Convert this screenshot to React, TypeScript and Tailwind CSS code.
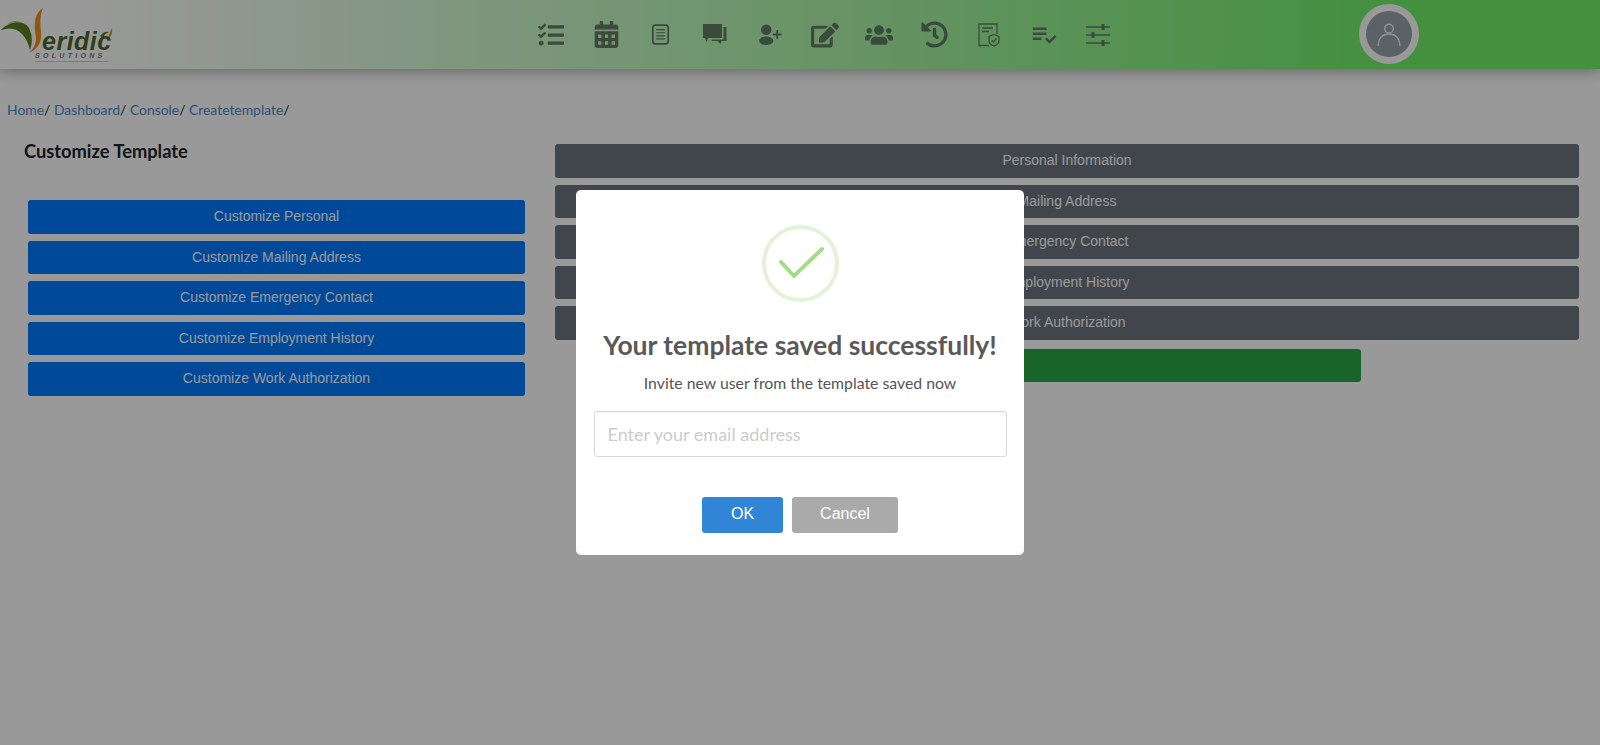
import { FaCalendarAlt, FaEdit, FaHistory, FaTasks, FaUsers } from 'react-icons/fa'
import { MdPlaylistAddCheck } from 'react-icons/md'

const customizeItems = ['Customize Personal', 'Customize Mailing Address', 'Customize Emergency Contact', 'Customize Employment History', 'Customize Work Authorization']
const sectionItems = ['Personal Information', 'Mailing Address', 'Emergency Contact', 'Employment History', 'Work Authorization']

const Logo = () => (
  <div className="relative h-[69px] w-[120px]">
    <svg viewBox="0 0 120 69" className="absolute inset-0 h-full w-full">
      <path d="M1 30C11 19 24 20 31 40C25 29 14 26 1 30Z" fill="#8fb04a" />
      <path d="M7 24C17 17 27 22 33 38C26 27 17 23 7 24Z" fill="#b9cf7a" />
      <path d="M1 30C14 25 26 32 30 50C33 42 32 35 29 28C24 20 10 21 1 30Z" fill="#5b7f1f" />
      <path d="M43 8C32 15 35 30 36 38C36 45 33 49 29 53C38 49 42 42 41 32C40 22 40 15 43 8Z" fill="#ef8f1c" />
      <path d="M112 28C113 33 111 37 107 40C109 35 110 32 112 28Z" fill="#ef8f1c" />
      <path d="M100 36C103 32 106 31 109 32C106 33 104 35 103 38Z" fill="#5b7f1f" />
      <path d="M35 61.5H108" stroke="#e8c8a0" strokeWidth="1" />
    </svg>
    <span className="absolute top-[29px] left-[42px] font-['Liberation_Sans',sans-serif] text-[25px] leading-[25px] font-bold tracking-[0.5px] text-[#4b6a28] italic">eridic</span>
    <span className="absolute top-[52px] left-[35px] font-['Liberation_Sans',sans-serif] text-[7px] leading-[8px] font-bold tracking-[3.3px] text-[#777] italic">SOLUTIONS</span>
  </div>
)

const DocLinesIcon = () => (
  <svg viewBox="0 0 20 24" className="h-[21px] w-[19px]" fill="none" stroke="currentColor">
    <rect x="1.2" y="1.2" width="17.6" height="21.6" rx="3" strokeWidth="2" />
    <path d="M5 6.5H15M5 10H15M5 13.5H15M5 17H15" strokeWidth="1.3" />
  </svg>
)

const ChatIcon = () => (
  <svg viewBox="0 0 24 22" className="h-[22px] w-[24px]" fill="currentColor">
    <path d="M0 0H19V14H5L3.8 18L2 14H0Z" />
    <path d="M20.5 3H23.5V17H18.5L17.5 20L14.5 17H8.5V15.6H20.5Z" />
  </svg>
)

const UserPlusIcon = () => (
  <svg viewBox="0 0 24 22" className="h-[21px] w-[23px]" fill="currentColor">
    <circle cx="7.5" cy="6" r="5.5" />
    <ellipse cx="7.5" cy="17.5" rx="7.5" ry="4.5" />
    <path d="M18 6.5H20V10H23.5V12H20V15.5H18V12H14.5V10H18Z" />
  </svg>
)

const DocShieldIcon = () => (
  <svg viewBox="0 0 22 24" className="h-[24px] w-[22px]" fill="none" stroke="currentColor" strokeWidth="1.3">
    <path d="M11 22.5H1V1H19V11" />
    <path d="M4 5H15M4 8.5H11" />
    <path d="M16 11.5L21 13.5V17.5C21 20 19 22 16 23.2C13 22 11 20 11 17.5V13.5Z" />
    <path d="M13.7 17.2L15.5 19L18.4 15.5" />
  </svg>
)

const SlidersIcon = () => (
  <svg viewBox="0 0 24 24" className="h-[24px] w-[24px]" fill="none" stroke="currentColor">
    <path d="M0 4H24M0 12H24M0 20H24" strokeWidth="1.3" />
    <path d="M17 1V7M7 9V15M17 17V23" strokeWidth="3" />
  </svg>
)

const navIcons = [
  <FaTasks key="tasks" size={26} />,
  <FaCalendarAlt key="calendar" size={27} />,
  <DocLinesIcon key="doc" />,
  <ChatIcon key="chat" />,
  <UserPlusIcon key="user" />,
  <FaEdit key="edit" size={28} />,
  <FaUsers key="users" size={28} />,
  <FaHistory key="history" size={27} />,
  <DocShieldIcon key="shield" />,
  <MdPlaylistAddCheck key="check" size={30} />,
  <SlidersIcon key="sliders" />,
]

const Header = () => (
  <header className="flex h-[69px] items-center bg-[linear-gradient(to_right,#fff_0%,#fff_5%,#70f069_88%)] shadow-[0_2px_14px_rgba(0,0,0,0.35)]">
    <div className="w-[524px] shrink-0">
      <Logo />
    </div>
    <nav className="flex w-[602px] shrink-0 text-[#627d64]">
      {navIcons.map((icon, i) => (
        <div key={i} className="flex h-[69px] w-[54.7px] items-center justify-center">
          {icon}
        </div>
      ))}
    </nav>
    <div className="mb-[2px] ml-[233px] flex h-[60px] w-[60px] items-center justify-center rounded-full bg-[#fff]">
      <div className="flex h-[46px] w-[46px] items-center justify-center rounded-full bg-[#96a3aa]">
        <svg viewBox="0 0 24 24" className="h-[26px] w-[26px]" fill="none" stroke="#f5f5f5" strokeWidth="1.2">
          <circle cx="12" cy="7" r="4" />
          <path d="M2 23C2 16 6 12 12 12C18 12 22 16 22 23" />
        </svg>
      </div>
    </div>
  </header>
)

const Modal = () => (
  <div className="fixed inset-0 flex items-center justify-center bg-black/40">
    <div className="flex h-[365px] w-[448px] flex-col items-center rounded-[5px] bg-white px-[18px] pt-[35px] font-['Lato',sans-serif]">
      <div className="flex h-[77px] w-[77px] items-center justify-center rounded-full border-4 border-[#e4f3d8]">
        <svg viewBox="0 0 77 77" className="h-[77px] w-[77px] shrink-0" fill="none" stroke="#a5dc86" strokeWidth="4" strokeLinecap="round">
          <path d="M19 37L32 51L60 24" />
        </svg>
      </div>
      <h2 className="mt-[25px] text-[26.5px] leading-[36px] font-bold whitespace-nowrap text-[#595959]">Your template saved successfully!</h2>
      <p className="mt-[8px] text-[15.8px] leading-[24px] text-[#545454]">Invite new user from the template saved now</p>
      <input
        placeholder="Enter your email address"
        className="mt-[16px] h-[46px] w-[413px] shrink-0 rounded-[3px] border border-[#d9d9d9] px-[13px] text-[18px] shadow-[inset_0_1px_1px_rgba(0,0,0,0.06)] outline-none placeholder:text-[#ccc]"
      />
      <div className="mt-[40px] flex gap-[9px] font-['Liberation_Sans',sans-serif] text-[16px] leading-[34px] text-white">
        <button className="h-[36px] w-[81px] rounded-[3px] bg-[#3085d6] pb-[2px]">OK</button>
        <button className="h-[36px] w-[106px] rounded-[3px] bg-[#aaa] pb-[2px]">Cancel</button>
      </div>
    </div>
  </div>
)

export default function App() {
  return (
    <div className="min-h-[745px] bg-white font-['Lato',sans-serif]">
      <Header />
      <div className="px-[7px] pt-[32px] text-[13.9px] leading-[18px] text-[#4f86c6]">
        <a>Home</a><span className="text-[#212529]">/ </span>
        <a>Dashboard</a><span className="text-[#212529]">/ </span>
        <a>Console</a><span className="text-[#212529]">/ </span>
        <a>Createtemplate</a><span className="text-[#212529]">/</span>
      </div>
      <main className="flex pt-[25px] font-['Liberation_Sans',sans-serif] text-[14px] text-white">
        <section className="ml-[24px] w-[501px] shrink-0">
          <h1 className="-mt-[5px] font-['Lato',sans-serif] text-[18.3px] leading-[24px] font-bold text-[#212529]">Customize Template</h1>
          <div className="mt-[37px] ml-[4px] flex w-[497px] flex-col gap-[7px]">
            {customizeItems.map(item => (
              <div key={item} className="flex h-[33.5px] items-center justify-center rounded-[3px] bg-[#007bff]">{item}</div>
            ))}
          </div>
        </section>
        <section className="ml-[30px] flex w-[1024px] shrink-0 flex-col gap-[7px]">
          {sectionItems.map(item => (
            <div key={item} className="flex h-[33.5px] items-center justify-center rounded-[3px] bg-[#6c757d]">{item}</div>
          ))}
          <div className="mt-[2px] ml-[218px] h-[33.5px] w-[588px] rounded-[3px] bg-[#28a745]" />
        </section>
      </main>
      <Modal />
    </div>
  )
}
